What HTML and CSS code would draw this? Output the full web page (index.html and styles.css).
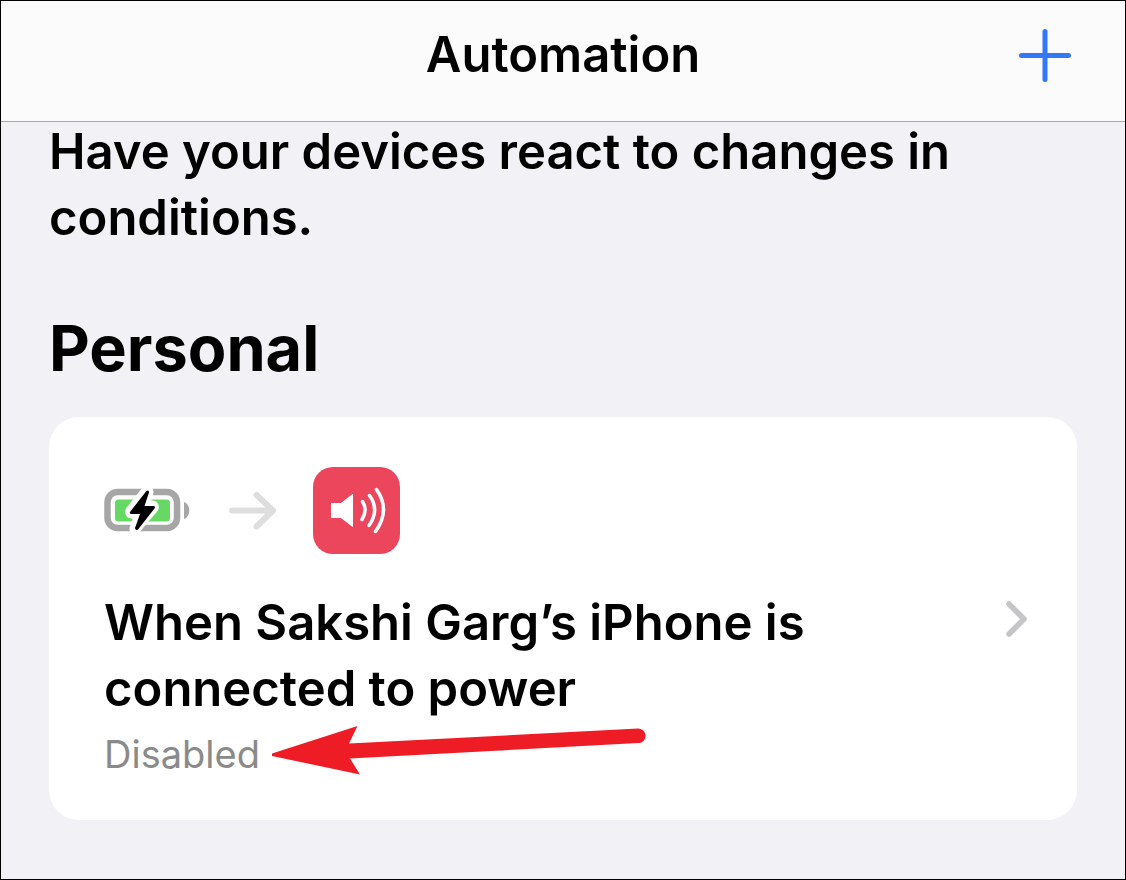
FILE: index.html
```
<!DOCTYPE html>
<html lang="en">
<head>
    <meta charset="UTF-8">
    <meta name="viewport" content="width=device-width, initial-scale=1.0">
    <title>Automation</title>
    <link rel="stylesheet" href="styles.css">
</head>
<body>
    <header class="nav-bar">
        <h1>Automation</h1>
        <button type="button" class="add-button" aria-label="Add automation">
            <svg width="54" height="54" viewBox="0 0 54 54" aria-hidden="true">
                <path d="M27 3.500V51.500M3.500 27.500H50.500" stroke="#3478f6" stroke-width="5" stroke-linecap="round"/>
            </svg>
        </button>
    </header>

    <main>
        <p class="intro">Have your devices react to changes in conditions.</p>
        <h2>Personal</h2>

        <a class="card" href="#">
            <div class="card-body">
                <div class="flow-icons">
                    <!-- charging battery -->
                    <svg class="battery" width="88" height="48" viewBox="0 0 88 48" aria-hidden="true">
                        <rect x="3.500" y="5" width="69.500" height="36" rx="10" fill="none" stroke="#a6a6a6" stroke-width="6.500"/>
                        <rect x="11" y="12.500" width="55" height="22" rx="3.500" fill="#65d964"/>
                        <path d="M80 15C87 17 87 30 80 32Z" fill="#a6a6a6"/>
                        <path d="M42 5L27 24Q26 26 28 26H36L31 42L49 21Q50 19 48 19H40L44 5Z" fill="#fff" stroke="#fff" stroke-width="11" stroke-linejoin="round"/>
                        <path d="M42 4.500L26 25Q25 27 27.500 27H36L31 41Q31.500 44 34 42.500L50.500 21.500Q52 19 49 19H40.500L45 5.500Q45 2 42 4.500Z" fill="#000"/>
                    </svg>
                    <svg class="arrow" width="50" height="40" viewBox="0 0 50 40" aria-hidden="true">
                        <path d="M4 19.500H45M28.500 4L45 19.500L28.500 35.500" fill="none" stroke="#dedede" stroke-width="6" stroke-linecap="round" stroke-linejoin="round"/>
                    </svg>
                    <span class="app-icon">
                        <svg width="87" height="87" viewBox="0 0 87 87" aria-hidden="true">
                            <path d="M18 36H28L39.500 27Q40 26.500 40 28V59Q40 60.500 39 59.500L28 51H18Z" fill="#fff"/>
                            <path d="M49.500 34.500Q55 43 49 52.500M56.500 28.500Q67 43 56 58.500M63.500 22.500Q78 43 62.500 64.500" fill="none" stroke="#fff" stroke-width="3.500" stroke-linecap="round"/>
                        </svg>
                    </span>
                </div>
                <h3>When Sakshi Garg’s iPhone is connected to power</h3>
                <div class="status">
                    <span>Disabled</span>
                    <!-- red pointer over the card -->
                    <svg class="pointer" width="376" height="50" viewBox="0 0 376 50" aria-hidden="true">
                        <path d="M0 27.500L85.500 0L77 17.500L366 2.500C376 3 376 17 366 17L78 32.500L88 48.500L0 30Z" fill="#ee1d25"/>
                    </svg>
                </div>
            </div>
            <svg class="chevron" width="24" height="38" viewBox="0 0 24 38" aria-hidden="true">
                <path d="M4 4L19 19L4 34" fill="none" stroke="#c5c5c7" stroke-width="5.500" stroke-linecap="round" stroke-linejoin="round"/>
            </svg>
        </a>
    </main>
</body>
</html>
```
FILE: styles.css
```
* { box-sizing: border-box; }
body { margin: 0; min-height: 100vh; border: 1px solid #000; background-color: #f2f1f6; color: #000; font-family: Inter, "Liberation Sans", sans-serif; }
h1, h2, h3, p { margin: 0; }
h1, h3, .intro { font-size: 49px; line-height: 66px; font-weight: 600; }

.nav-bar { display: grid; grid-template-columns: 1fr auto 1fr; align-items: center; padding: 21px 53px 33px; border-bottom: 1px solid #a9a9ad; background-color: #fbfbfc; }
.nav-bar h1 { grid-column: 2; }
.add-button { justify-self: end; display: flex; padding: 0; border: none; background: none; cursor: pointer; }

main { padding: 0 48px 58px; }
.intro { margin-top: -3px; }
h2 { margin: 58px 0 30px; font-size: 63px; line-height: 78px; font-weight: 700; }

.card { display: flex; align-items: center; justify-content: space-between; padding: 0 48px 0 55px; border-radius: 30px; background-color: #fff; color: inherit; text-decoration: none; }
.card-body { max-width: 760px; padding: 50px 0 43px; }
.flow-icons { display: flex; align-items: center; margin-bottom: 36px; }
.arrow { margin: 0 35px 0 36px; }
.app-icon { display: flex; border-radius: 20px; background-color: #eb465c; }
.status { position: relative; width: fit-content; margin-top: 9px; color: #8a8a8a; font-size: 38px; line-height: 46px; }
.pointer { position: absolute; left: 100%; top: -5px; margin-left: 12px; }
.chevron { flex-shrink: 0; }
```
